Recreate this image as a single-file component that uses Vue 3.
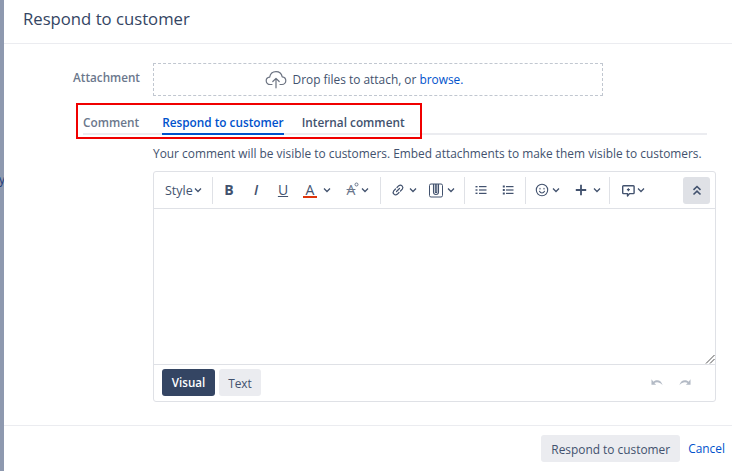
<script setup>
const tabs = [
  { label: 'Comment', active: false, muted: true },
  { label: 'Respond to customer', active: true, muted: false },
  { label: 'Internal comment', active: false, muted: false }
]
</script>

<template>
  <div class="page">
    <div class="strip"><span class="peek">y</span></div>
    <div class="dialog">
      <header class="head"><h2 class="title">Respond to customer</h2></header>
      <main class="body">
        <div class="attach-row">
          <label class="label">Attachment</label>
          <div class="drop">
            <svg class="cloud" width="22" height="20" viewBox="0 0 22 20" fill="none" stroke="#6b7280" stroke-width="1.2" stroke-linecap="round" stroke-linejoin="round">
              <path d="M7 15.5H5.2C3 15.5 1.2 13.9 1.2 11.8c0-2 1.5-3.5 3.5-3.7C5.200 5 7.700 2.600 11 2.600c3.200 0 5.700 2.300 6.200 5.300 2 .2 3.600 1.800 3.600 3.900 0 2-1.700 3.700-3.800 3.700h-2" />
              <path d="M11 18.800V9.500M7.800 12.500 11 9.300l3.200 3.200" />
            </svg>
            <span>Drop files to attach, or <a class="link">browse.</a></span>
          </div>
        </div>
        <div class="tabs-wrap">
          <nav class="tabs">
            <span v-for="t in tabs" :key="t.label" class="tab" :class="{ active: t.active, muted: t.muted }">{{ t.label }}</span>
          </nav>
          <div class="redbox"></div>
        </div>
        <p class="hint">Your comment will be visible to customers. Embed attachments to make them visible to customers.</p>
        <section class="editor">
          <div class="toolbar">
            <div class="group first">
              <span class="style">Style<svg class="chev" viewBox="0 0 8 6"><path d="M1 1.500 4 4.500 7 1.500" /></svg></span>
            </div>
            <div class="group g2">
              <span class="gl bold">B</span>
              <span class="gl ital">I</span>
              <span class="gl und">U</span>
              <span class="gl color">A</span><svg class="chev c1" viewBox="0 0 8 6"><path d="M1 1.500 4 4.500 7 1.500" /></svg>
              <span class="gl strike">A<svg class="deg" width="5" height="5" viewBox="0 0 5 5" fill="none" stroke="#6b778c"><circle cx="2.500" cy="2.500" r="1.500" /></svg></span><svg class="chev" viewBox="0 0 8 6"><path d="M1 1.500 4 4.500 7 1.500" /></svg>
            </div>
            <div class="group g3">
              <svg class="ic" width="14" height="14" viewBox="0 0 14 14" fill="none" stroke="#42526e" stroke-width="1.200" stroke-linecap="round">
                <path d="M5.500 8.500 8.500 5.500" />
                <path d="M6 4.500 7.800 2.700a2.500 2.500 0 0 1 3.500 3.500L9.500 8" />
                <path d="M8 9.500 6.200 11.300a2.500 2.500 0 0 1-3.500-3.500L4.500 6" />
              </svg>
              <svg class="chev c2" viewBox="0 0 8 6"><path d="M1 1.500 4 4.500 7 1.500" /></svg>
              <svg class="ic clip" width="14" height="15" viewBox="0 0 14 15" fill="none" stroke="#42526e" stroke-width="1">
                <rect x="0.500" y="1" width="13" height="13" rx="1.500" />
                <path d="M4.500 1v8a2.500 2.500 0 0 0 5 0V1M6.300 1v8a.8.8 0 0 0 1.500 0V1" stroke-width="1.100" />
              </svg>
              <svg class="chev c2b" viewBox="0 0 8 6"><path d="M1 1.500 4 4.500 7 1.500" /></svg>
            </div>
            <div class="group g4">
              <svg class="ic" width="12" height="12" viewBox="0 0 12 12" fill="#42526e">
                <rect x="0.500" y="2" width="2" height="1.400" /><rect x="4" y="2" width="7.500" height="1.200" />
                <rect x="0.500" y="5.300" width="2" height="1.400" /><rect x="4" y="5.400" width="7.500" height="1.200" />
                <rect x="0.500" y="8.600" width="2" height="1.400" /><rect x="4" y="8.800" width="7.500" height="1.200" />
              </svg>
              <svg class="ic" width="12" height="12" viewBox="0 0 12 12" fill="#42526e">
                <rect x="0.800" y="1.500" width="2" height="2" /><rect x="4" y="2" width="7.500" height="1.200" />
                <rect x="0.800" y="5" width="2" height="2" /><rect x="4" y="5.400" width="7.500" height="1.200" />
                <rect x="0.800" y="8.500" width="2" height="2" /><rect x="4" y="8.800" width="7.500" height="1.200" />
              </svg>
            </div>
            <div class="group g5">
              <svg class="ic" width="14" height="14" viewBox="0 0 14 14" fill="none" stroke="#42526e" stroke-width="1.100" stroke-linecap="round">
                <circle cx="7" cy="7" r="5.700" />
                <path d="M4.500 8.300c.6 1.200 1.400 1.700 2.500 1.700s1.900-.5 2.500-1.700" />
                <path d="M5 5.200v.8M9 5.200v.8" />
              </svg>
              <svg class="chev c5" viewBox="0 0 8 6"><path d="M1 1.500 4 4.500 7 1.500" /></svg>
              <svg class="ic plus" width="12" height="12" viewBox="0 0 12 12" fill="none" stroke="#42526e" stroke-width="1.800">
                <path d="M6 .8v10.400M.8 6h10.400" />
              </svg>
              <svg class="chev c6" viewBox="0 0 8 6"><path d="M1 1.500 4 4.500 7 1.500" /></svg>
            </div>
            <div class="group g6">
              <svg class="ic" width="15" height="15" viewBox="0 0 15 15" fill="none" stroke="#42526e" stroke-width="1.400" stroke-linejoin="round">
                <path d="M2.500 2.800h9.800a.8.800 0 0 1 .8.8v6.200a.8.800 0 0 1-.8.800H8.500L6.500 13v-2.400H2.500a.8.800 0 0 1-.8-.8V3.600a.8.800 0 0 1 .8-.8z" />
                <path d="M7.400 5.200v3M5.900 6.700h3" stroke-width="1.200" />
              </svg>
              <svg class="chev c3" viewBox="0 0 8 6"><path d="M1 1.500 4 4.500 7 1.500" /></svg>
            </div>
            <button class="collapse">
              <svg width="10" height="11" viewBox="0 0 10 11" fill="none" stroke="#42526e" stroke-width="1.600">
                <path d="M1.500 4.800 5 1.500l3.500 3.300M1.500 9.500 5 6.200l3.500 3.300" />
              </svg>
            </button>
          </div>
          <div class="area">
            <svg class="grip" width="10" height="10" viewBox="0 0 10 10" stroke="#555" stroke-width="1">
              <path d="M1 9.500 9.500 1M5 9.500 9.500 5" />
            </svg>
          </div>
          <div class="foot">
            <button class="mode on">Visual</button>
            <button class="mode">Text</button>
            <div class="undo">
              <svg width="13" height="8" viewBox="0 0 14 8" fill="#b3bac5"><path d="M.5 1v6h5L3.600 5.200C5.800 3.700 9.500 3.900 12.500 7.500 11.500 2.500 6.500 .5 2.600 3.700z" /></svg>
              <svg width="13" height="8" viewBox="0 0 14 8" fill="#b3bac5"><path d="M13.500 1v6h-5l1.900-1.800C8.200 3.700 4.500 3.900 1.500 7.500 2.500 2.500 7.500 .5 11.400 3.700z" /></svg>
            </div>
          </div>
        </section>
      </main>
      <footer class="dfoot">
        <button class="submit">Respond to customer</button>
        <a class="cancel">Cancel</a>
      </footer>
    </div>
  </div>
</template>

<style>
html, body { margin: 0; background: #fff; overflow: hidden; }
</style>

<style scoped>
.page {
  width: 732px; height: 471px; display: flex; overflow: hidden;
  font-family: "Open Sans", "Noto Sans", sans-serif; font-size: 11.900px; color: #42526e;
}
.strip { width: 4px; background: #8e99af; flex: none; overflow: hidden; box-sizing: border-box; padding-top: 172px; display: flex; justify-content: flex-end; align-items: flex-start; }
.peek { font-size: 12px; line-height: 16px; color: #1d3a78; flex: none; margin-right: -1px; }
.dialog { flex: 1; display: flex; flex-direction: column; min-width: 0; }
.head { height: 43px; border-bottom: 1px solid #ebecf0; display: flex; align-items: flex-start; padding-left: 19px; box-sizing: content-box; }
.title { margin: 0; font-size: 16.700px; line-height: 38px; font-weight: 400; color: #344563; white-space: nowrap; }
.body { flex: 1; padding: 19px 0 0 0; display: flex; flex-direction: column; }
.attach-row { display: flex; align-items: flex-start; }
.label { width: 136px; text-align: right; font-weight: 600; color: #6b778c; line-height: 16px; padding-top: 6px; font-size: 11.700px; }
.drop {
  margin-left: 13px; width: 450px; height: 33px; box-sizing: border-box; padding: 0 28px 1px 0;
  border: 1px dashed #c1c7d0; display: flex; align-items: center; justify-content: center; gap: 6px;
}
.cloud { flex: none; }
.link { color: #0052cc; }
.tabs-wrap { position: relative; margin-top: 7px; height: 32px; }
.tabs { margin-left: 79px; width: 624px; height: 32px; box-sizing: border-box; border-bottom: 2px solid #ebecf0; display: flex; gap: 18px; }
.tab { height: 32px; box-sizing: border-box; line-height: 24px; padding-top: 7px; font-weight: 600; font-size: 11.800px; color: #42526e; white-space: nowrap; }
.tab.muted { color: #6b778c; margin-right: 5px; }
.tab.active { color: #0052cc; border-bottom: 2px solid #0052cc; }
.redbox { position: absolute; left: 72px; top: 0; width: 346px; height: 36px; box-sizing: border-box; border: 2px solid #f00000; }
.hint { margin: 10px 0 0 149px; line-height: 16px; color: #42526e; white-space: nowrap; font-size: 11.900px; }
.editor { margin: 10px 0 0 149px; width: 563px; height: 231px; box-sizing: border-box; border: 1px solid #dfe1e6; border-radius: 3px; display: flex; flex-direction: column; }
.toolbar { height: 37px; border-bottom: 1px solid #dfe1e6; display: flex; align-items: center; position: relative; flex: none; box-sizing: border-box; }
.group { height: 27px; display: flex; align-items: center; border-right: 1px solid #dfe1e6; box-sizing: border-box; flex: none; }
.ic { flex: none; }
.first { width: 59px; padding-left: 11px; }
.style { display: flex; align-items: center; gap: 1px; color: #42526e; font-size: 12.500px; }
.chev { width: 8px; height: 6px; fill: none; stroke: #42526e; stroke-width: 1.300; flex: none; }
.g2 { width: 168px; padding-left: 9px; }
.gl { display: inline-block; width: 14px; text-align: center; color: #42526e; font-size: 14px; line-height: 16px; position: relative; flex: none; }
.bold { font-weight: 700; margin-right: 13px; }
.ital { font-style: italic; font-weight: 600; margin-right: 13px; }
.und { text-decoration: underline; margin-right: 13px; }
.color { border-bottom: 2px solid #de350b; line-height: 13px; margin-right: 6px; }
.c1 { margin-right: 13px; }
.strike { text-decoration: line-through; color: #6b778c; margin-right: 3px; }
.deg { position: absolute; left: 10px; top: 0; }
.g3 { width: 84px; padding-left: 10px; }
.c2 { margin-left: 4px; margin-right: 12px; }
.c2b { margin-left: 4px; }
.g4 { width: 61px; padding-left: 10px; gap: 15px; }
.g5 { width: 84px; padding-left: 9px; }
.c5 { margin-left: 3px; margin-right: 15px; }
.c6 { margin-left: 6px; }
.g6 { border-right: none; padding-left: 11px; }
.c3 { margin-left: 1px; }
.collapse { position: absolute; left: 529px; top: 5px; width: 27px; height: 27px; border: 0; border-radius: 3px; background: #dfe1e6; display: flex; align-items: center; justify-content: center; padding: 0; }
.area { flex: 1; position: relative; }
.grip { position: absolute; right: 0; bottom: 0; }
.foot { height: 37px; flex: none; box-sizing: border-box; border-top: 1px solid #dfe1e6; display: flex; align-items: flex-start; padding: 4px 0 0 8px; gap: 4px; }
.mode { height: 27px; border: 0; border-radius: 3px; background: #ebecf0; color: #42526e; font: inherit; padding: 0; width: 42px; }
.mode.on { background: #344563; color: #fff; width: 53px; font-weight: 600; font-size: 11.600px; }
.undo { margin-left: auto; margin-right: 24px; margin-top: 9px; display: flex; gap: 14px; }
.dfoot { height: 46px; flex: none; box-sizing: border-box; border-top: 1px solid #ebecf0; display: flex; align-items: flex-start; padding: 9px 7px 0 0; justify-content: flex-end; gap: 8px; }
.submit { height: 27px; width: 139px; border: 0; border-radius: 3px; background: #ebecf0; color: #42526e; font: inherit; padding: 0; }
.cancel { color: #0052cc; line-height: 27px; }
</style>
